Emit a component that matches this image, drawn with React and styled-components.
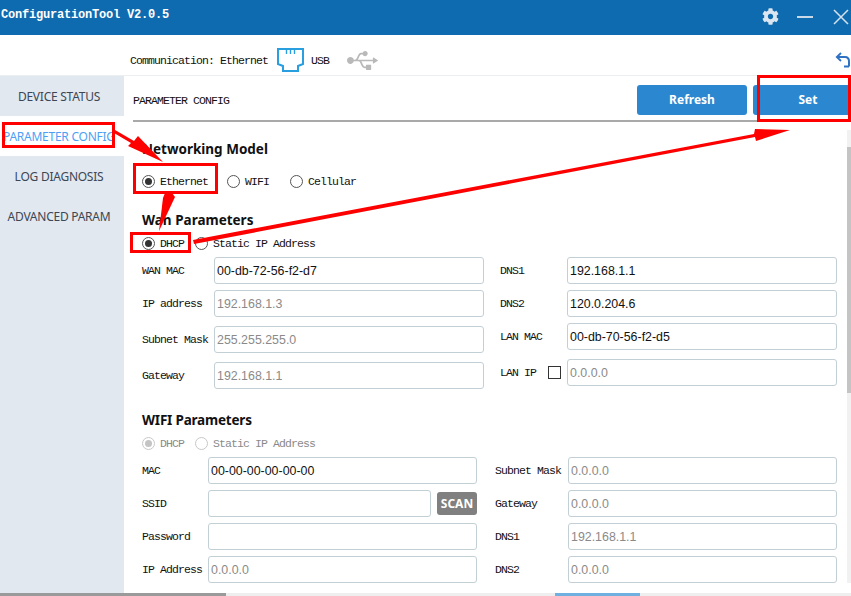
import React from 'react';
import styled, { createGlobalStyle } from 'styled-components';
import { FaCog, FaUsb } from 'react-icons/fa';

const Global = createGlobalStyle`
  html, body { margin: 0; padding: 0; background: #fff; }
  * { box-sizing: border-box; }
`;

const MONO = `"Liberation Mono", "DejaVu Sans Mono", monospace`;
const UI = `"Noto Sans", "Open Sans", sans-serif`;
const ARIAL = `"Liberation Sans", Arial, sans-serif`;

const Page = styled.div`
  position: relative;
  width: 851px;
  height: 596px;
  overflow: hidden;
  background: #fff;
  display: flex;
  flex-direction: column;
`;
const TitleBar = styled.header`
  height: 35px;
  flex: none;
  background: #0f6bb0;
  display: flex;
  align-items: center;
  color: #fff;
  padding: 0 2px 2px 1px;
`;
const AppTitle = styled.div`
  flex: 1;
  font: bold 12px ${MONO};
  letter-spacing: -0.2px;
  padding-bottom: 3px;
`;
const WinControls = styled.div`
  display: flex;
  align-items: center;
  color: #dbe6f0;
`;
const MinBar = styled.span`
  display: block;
  width: 16px;
  height: 2px;
  background: #c9d9e8;
  margin: 0 20px 0 18px;
`;
const CommRow = styled.div`
  height: 41px;
  flex: none;
  display: flex;
  align-items: center;
  border-bottom: 1px solid #eceeef;
  padding: 10px 1px 0 130px;
  font: 11.5px ${MONO};
  letter-spacing: -0.9px;
  color: #111;
`;
const CommSpacer = styled.div`flex: 1;`;
const CommText = styled.span`white-space: nowrap;`;
const Body = styled.div`
  height: 517px;
  flex: none;
  display: flex;
`;
const Sidebar = styled.nav`
  width: 124px;
  flex: none;
  background: #e1e8ef;
`;
const NavItem = styled.div`
  height: 40px;
  display: flex;
  align-items: center;
  justify-content: ${p => (p.$active ? 'flex-start' : 'center')};
  overflow: hidden;
  white-space: nowrap;
  font: 12px ${UI};
  letter-spacing: -0.25px;
  padding-left: ${p => (p.$active ? '3px' : '0')};
  padding-right: ${p => (p.$active ? '11px' : '6px')};
  color: ${p => (p.$active ? '#4d9ff5' : '#3c4654')};
  background: ${p => (p.$active ? '#fff' : 'transparent')};
`;
const NavLabel = styled.span`
  display: block;
  overflow: hidden;
`;
const Main = styled.main`
  flex: 1;
  min-width: 0;
  display: flex;
  flex-direction: column;
`;
const PanelHead = styled.div`
  height: 46px;
  flex: none;
  margin-left: 9px;
  border-bottom: 2px solid #a9a9a9;
  display: flex;
  align-items: center;
  padding-top: 5px;
`;
const PanelTitle = styled.div`
  flex: 1;
  font: 11.5px ${MONO};
  letter-spacing: -0.9px;
  color: #111;
`;
const PrimaryButton = styled.button`
  height: 30px;
  width: ${p => p.$w}px;
  margin-left: ${p => p.$ml || 0}px;
  margin-right: ${p => p.$mr || 0}px;
  margin-bottom: 2px;
  border: 0;
  padding: 0;
  border-radius: 3px;
  background: #2b88d0;
  color: #fff;
  font: bold 12px ${UI};
  flex: none;
`;
const Scroller = styled.div`
  flex: 1;
  display: flex;
  min-height: 0;
`;
const FormArea = styled.div`
  width: 723px;
  padding: 18px 0 0 18px;
`;
const Heading = styled.h3`
  margin: ${p => p.$top || 0}px 0 0;
  font: bold 13.5px/18px ${UI};
  letter-spacing: ${p => p.$tight ? '-0.2px' : '0'};
  color: #111;
`;
const RadioRow = styled.div`
  height: 16px;
  margin-top: ${p => p.$top}px;
  display: flex;
  align-items: center;
  font: 11.5px ${MONO};
  letter-spacing: -0.9px;
  color: ${p => (p.$off ? '#8a8a8a' : '#111')};
`;
const Radio = styled.span`
  display: block;
  flex: none;
  width: 13px;
  height: 13px;
  border-radius: 50%;
  border: 1px solid ${p => (p.$off ? '#c8c8c8' : '#555')};
  margin-left: ${p => p.$ml || 0}px;
  margin-right: 5px;
  padding: 2px;
  background: #fff;
  &::after {
    content: '';
    display: ${p => (p.$on ? 'block' : 'none')};
    width: 7px;
    height: 7px;
    border-radius: 50%;
    background: ${p => (p.$off ? '#c4c4c4' : '#333')};
  }
`;
const Fields = styled.div`
  display: flex;
  margin-top: 6px;
`;
const FieldCol = styled.div`
  width: ${p => p.$w}px;
  margin-left: ${p => p.$ml || 0}px;
  flex: none;
`;
const Field = styled.div`
  display: flex;
  align-items: center;
  height: 27px;
  margin-bottom: ${p => p.$mb}px;
`;
const Label = styled.label`
  flex: none;
  width: ${p => p.$w}px;
  font: 11.5px ${MONO};
  letter-spacing: -0.9px;
  white-space: nowrap;
  color: #111;
  display: flex;
  align-items: center;
  justify-content: space-between;
  padding-right: ${p => p.$pr || 0}px;
`;
const TextBox = styled.div`
  flex: 1;
  min-width: 0;
  height: 27px;
  border: 1px solid #c2d0d6;
  border-radius: 3px;
  padding: 1px 2px 0;
  background: #fff;
  display: flex;
  align-items: center;
  font: 12.4px ${ARIAL};
  color: ${p => (p.$dim ? '#8a8a8a' : '#111')};
`;
const CheckBox = styled.span`
  display: block;
  width: 13px;
  height: 13px;
  border: 1px solid #333;
`;
const ScanButton = styled.button`
  flex: none;
  width: 40px;
  height: 23px;
  margin-left: 6px;
  border: 0;
  padding: 0;
  border-radius: 3px;
  background: #808080;
  color: #fff;
  font: bold 12px ${UI};
`;
const ScrollTrack = styled.div`
  width: 4px;
  margin: 8px 0 10px;
  background: #f1f1f1;
  padding-top: 17px;
`;
const ScrollThumb = styled.div`
  height: 246px;
  background: #c4c4c4;
`;
const BottomStrip = styled.div`
  height: 3px;
  flex: none;
  display: flex;
  background: #eeeeee;
`;
const StripPart = styled.div`
  width: ${p => p.$w}px;
  background: ${p => p.$c};
`;
const Marks = styled.svg`
  position: absolute;
  left: 0;
  top: 0;
  pointer-events: none;
`;

const wan = [
  ['WAN MAC', '00-db-72-56-f2-d7', false, 6],
  ['IP address', '192.168.1.3', true, 9],
  ['Subnet Mask', '255.255.255.0', true, 9],
  ['Gateway', '192.168.1.1', true, 0],
];
const wanRight = [
  ['DNS1', '192.168.1.1', false, 6],
  ['DNS2', '120.0.204.6', false, 6],
  ['LAN MAC', '00-db-70-56-f2-d5', false, 9],
];
const wifiRight = [
  ['Subnet Mask', '0.0.0.0'],
  ['Gateway', '0.0.0.0'],
  ['DNS1', '192.168.1.1'],
  ['DNS2', '0.0.0.0'],
];

export default function App() {
  return (
    <Page>
      <Global />
      <TitleBar>
        <AppTitle>ConfigurationTool V2.0.5</AppTitle>
        <WinControls>
          <FaCog size={17} />
          <MinBar />
          <svg width="16" height="16" viewBox="0 0 16 16" fill="none" stroke="#d5e2ee" strokeWidth="1.5">
            <path d="M1 1L15 15M15 1L1 15" />
          </svg>
        </WinControls>
      </TitleBar>
      <CommRow>
        <CommText>Communication: Ethernet</CommText>
        <svg width="27" height="24" viewBox="0 0 27 24" fill="none" stroke="#2a9fe0" strokeWidth="2" style={{ margin: '0 7px 0 9px' }}>
          <path d="M1 1H26V16L21 18V23H6V18L1 16Z" />
          <path d="M9.5 2V6M13.5 2V6M17.5 2V6" strokeWidth="1.4" />
        </svg>
        <CommText>USB</CommText>
        <FaUsb size={31} color="#b9b9b9" style={{ marginLeft: 18 }} />
        <CommSpacer />
        <svg width="15" height="16" viewBox="0 0 15 16" fill="none" stroke="#2f72c4" strokeWidth="2">
          <path d="M14 14.5H9M2 5H10C12.5 5 14 6.5 14 9.5V14.5" />
          <path d="M6 1L1.8 5L6 9" strokeWidth="1.8" />
        </svg>
      </CommRow>
      <Body>
        <Sidebar>
          <NavItem>DEVICE STATUS</NavItem>
          <NavItem $active><NavLabel>PARAMETER CONFIG</NavLabel></NavItem>
          <NavItem>LOG DIAGNOSIS</NavItem>
          <NavItem>ADVANCED PARAM</NavItem>
        </Sidebar>
        <Main>
          <PanelHead>
            <PanelTitle>PARAMETER CONFIG</PanelTitle>
            <PrimaryButton $w={110}>Refresh</PrimaryButton>
            <PrimaryButton $w={110} $ml={6} $mr={-12}>Set</PrimaryButton>
          </PanelHead>
          <Scroller>
            <FormArea>
              <Heading>Networking Model</Heading>
              <RadioRow $top={15}>
                <Radio $on />Ethernet
                <Radio $ml={19} />WIFI
                <Radio $ml={21} />Cellular
              </RadioRow>
              <Heading $top={22}>Wan Parameters</Heading>
              <RadioRow $top={6}>
                <Radio $on />DHCP
                <Radio $ml={11} />Static IP Address
              </RadioRow>
              <Fields>
                <FieldCol $w={342}>
                  {wan.map(([l, v, dim, mb]) => (
                    <Field key={l} $mb={mb}>
                      <Label $w={72}>{l}</Label>
                      <TextBox $dim={dim}>{v}</TextBox>
                    </Field>
                  ))}
                </FieldCol>
                <FieldCol $w={337} $ml={16}>
                  {wanRight.map(([l, v, dim, mb]) => (
                    <Field key={l} $mb={mb}>
                      <Label $w={67}>{l}</Label>
                      <TextBox $dim={dim}>{v}</TextBox>
                    </Field>
                  ))}
                  <Field $mb={0}>
                    <Label $w={67} $pr={6}>LAN IP<CheckBox /></Label>
                    <TextBox $dim>0.0.0.0</TextBox>
                  </Field>
                </FieldCol>
              </Fields>
              <Heading $top={22} $tight>WIFI Parameters</Heading>
              <RadioRow $top={6} $off>
                <Radio $on $off />DHCP
                <Radio $ml={11} $off />Static IP Address
              </RadioRow>
              <Fields>
                <FieldCol $w={335}>
                  <Field $mb={6}>
                    <Label $w={66}>MAC</Label>
                    <TextBox>00-00-00-00-00-00</TextBox>
                  </Field>
                  <Field $mb={6}>
                    <Label $w={66}>SSID</Label>
                    <TextBox />
                    <ScanButton>SCAN</ScanButton>
                  </Field>
                  <Field $mb={6}>
                    <Label $w={66}>Password</Label>
                    <TextBox />
                  </Field>
                  <Field $mb={0}>
                    <Label $w={66}>IP Address</Label>
                    <TextBox $dim>0.0.0.0</TextBox>
                  </Field>
                </FieldCol>
                <FieldCol $w={342} $ml={18}>
                  {wifiRight.map(([l, v], i) => (
                    <Field key={l} $mb={i < 3 ? 6 : 0}>
                      <Label $w={73}>{l}</Label>
                      <TextBox $dim>{v}</TextBox>
                    </Field>
                  ))}
                </FieldCol>
              </Fields>
            </FormArea>
            <ScrollTrack><ScrollThumb /></ScrollTrack>
          </Scroller>
        </Main>
      </Body>
      <BottomStrip>
        <StripPart $w={226} $c="#9a9a9a" />
        <StripPart $w={329} $c="#eeeeee" />
        <StripPart $w={85} $c="#6fb0e0" />
      </BottomStrip>
      <Marks width="851" height="596" viewBox="0 0 851 596">
        <g fill="none" stroke="#f00" strokeWidth="3">
          <rect x="3.5" y="123.5" width="110" height="23" />
          <rect x="134.5" y="164.5" width="82" height="28" />
          <rect x="131.5" y="233.5" width="58" height="18" />
          <rect x="758.5" y="76.5" width="91" height="44" />
        </g>
        <g fill="#f00">
          <polygon points="115,130 134,141 138,136 163,162 128,146 131,143 114,133" />
          <polygon points="165,193 172,193 175,197 159,231 163,198" />
          <polygon points="193,240 754,134 755,129 790,130 756,141 755,137 194,244" />
        </g>
      </Marks>
    </Page>
  );
}
